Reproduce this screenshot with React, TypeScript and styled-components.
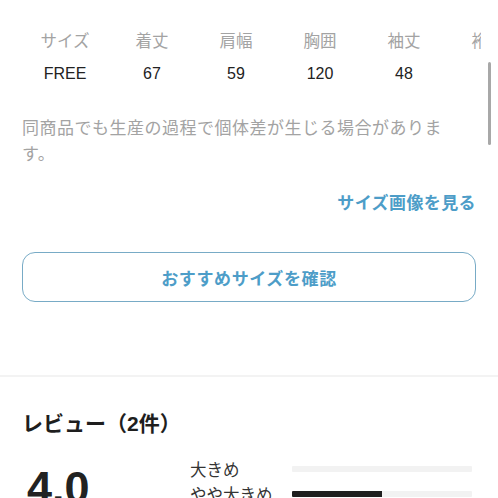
import React from "react";
import styled, { createGlobalStyle } from "styled-components";

const Global = createGlobalStyle`
  html, body { margin: 0; padding: 0; background: #ffffff; }
  body {
    font-family: "Liberation Sans", "Noto Sans CJK JP", sans-serif;
    color: #222;
    overflow: hidden;
  }
`;

const Page = styled.div`
  position: relative;
  width: 498px;
  height: 498px;
  overflow: hidden;
`;

const Section = styled.div`
  padding: 0 22px;
`;

const TableViewport = styled.div`
  margin: 0 -5px 0 -2px;
  padding-top: 28px;
  overflow: hidden;
`;

const TableGrid = styled.div`
  display: grid;
  grid-template-columns: 90px repeat(5, 84px);
  row-gap: 7px;
  width: max-content;
`;

const Cell = styled.div<{ $head?: boolean }>`
  height: 26px;
  line-height: 26px;
  text-align: center;
  white-space: nowrap;
  font-size: ${(p) => (p.$head ? "16.5px" : "16px")};
  color: ${(p) => (p.$head ? "#a3a3a3" : "#222")};
`;

const Note = styled.p`
  margin: 29px 0 0;
  font-size: 17px;
  line-height: 26px;
  color: #a3a3a3;
  padding-right: 10px;
  letter-spacing: 0.5px;
`;

const LinkRow = styled.div`
  margin-top: 23px;
  display: flex;
  justify-content: flex-end;
`;

const TextLink = styled.a`
  font-size: 17px;
  line-height: 26px;
  font-weight: 700;
  color: #4d9dc8;
  text-decoration: none;
  letter-spacing: 0.4px;
`;

const OutlineButton = styled.button`
  margin-top: 35px;
  width: 100%;
  height: 50px;
  box-sizing: border-box;
  border: 1.5px solid #78abc6;
  border-radius: 13px;
  background: #fff;
  font-family: inherit;
  font-size: 17px;
  font-weight: 700;
  color: #4d9dc8;
  letter-spacing: 0.6px;
  display: flex;
  align-items: center;
  justify-content: center;
`;

const Divider = styled.div`
  margin-top: 73px;
  height: 2px;
  background: #f3f3f3;
`;

const ReviewTitle = styled.h2`
  margin: 33px 0 0;
  font-size: 21px;
  line-height: 28px;
  font-weight: 700;
  color: #1e1e1e;
`;

const Summary = styled.div`
  margin-top: 18px;
  display: grid;
  grid-template-columns: 168px 1fr;
`;

const Score = styled.div`
  font-size: 45px;
  line-height: 45px;
  font-weight: 700;
  color: #222;
  margin-top: 9px;
  padding-left: 5px;
`;

const FitList = styled.div`
  display: flex;
  flex-direction: column;
`;

const FitRow = styled.div`
  display: grid;
  grid-template-columns: 102px 180px;
  align-items: center;
  height: 25px;
`;

const FitLabel = styled.span`
  font-size: 16.5px;
  color: #333;
  white-space: nowrap;
`;

const Track = styled.div`
  height: 6px;
  border-radius: 1px;
  background: #f2f2f2;
  overflow: hidden;
`;

const Fill = styled.div`
  height: 100%;
  background: #1f1f1f;
`;

const ScrollIndicator = styled.div`
  position: absolute;
  left: 488px;
  top: 62px;
  width: 3px;
  height: 83px;
  border-radius: 2px;
  background: #a8a8a8;
`;

const heads = ["サイズ", "着丈", "肩幅", "胸囲", "袖丈", "裄丈"];
const values = ["FREE", "67", "59", "120", "48", "-"];
const fits = [
  { label: "大きめ", pct: 0 },
  { label: "やや大きめ", pct: 50 },
];

export default function App() {
  return (
    <Page>
      <Global />
      <Section>
        <TableViewport>
          <TableGrid>
            {heads.map((h) => (
              <Cell key={h} $head>
                {h}
              </Cell>
            ))}
            {values.map((v, i) => (
              <Cell key={i}>{v}</Cell>
            ))}
          </TableGrid>
        </TableViewport>
        <Note>同商品でも生産の過程で個体差が生じる場合があります。</Note>
        <LinkRow>
          <TextLink href="#">サイズ画像を見る</TextLink>
        </LinkRow>
        <OutlineButton>おすすめサイズを確認</OutlineButton>
      </Section>
      <Divider />
      <Section>
        <ReviewTitle>レビュー（2件）</ReviewTitle>
        <Summary>
          <Score>4.0</Score>
          <FitList>
            {fits.map((f) => (
              <FitRow key={f.label}>
                <FitLabel>{f.label}</FitLabel>
                <Track>
                  <Fill style={{ width: `${f.pct}%` }} />
                </Track>
              </FitRow>
            ))}
          </FitList>
        </Summary>
      </Section>
      <ScrollIndicator />
    </Page>
  );
}
